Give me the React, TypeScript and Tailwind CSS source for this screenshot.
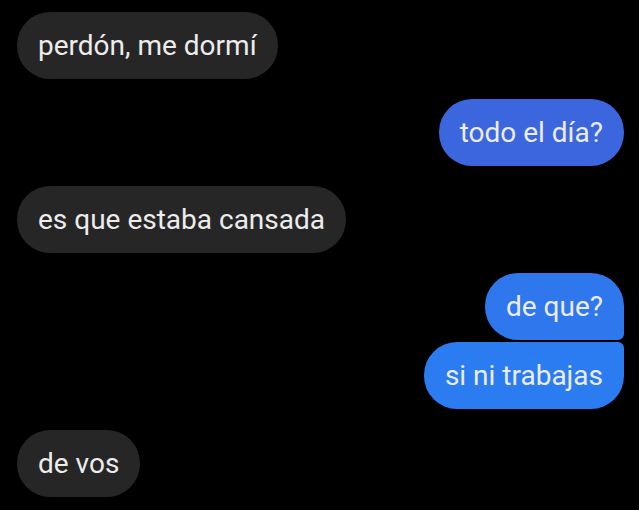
import React from 'react';

type Msg = { text: string; mine: boolean; shape: string; color?: string };

const messages: Msg[] = [
  { text: 'perdón, me dormí', mine: false, shape: 'rounded-[33px]' },
  { text: 'todo el día?', mine: true, shape: 'rounded-[33px]', color: 'bg-[#3b66de]' },
  { text: 'es que estaba cansada', mine: false, shape: 'rounded-[33px]' },
  { text: 'de que?', mine: true, shape: 'rounded-[33px] rounded-br-[6px]', color: 'bg-[#2f77ec]' },
  { text: 'si ni trabajas', mine: true, shape: 'rounded-[33px] rounded-tr-[6px]', color: 'bg-[#2a7cf0]' },
  { text: 'de vos', mine: false, shape: 'rounded-[33px]' },
];

const Bubble: React.FC<{ m: Msg }> = ({ m }) => (
  <div
    className={`h-[67px] px-[21px] flex items-center text-[28px] text-[#ececec] ${m.shape} ${
      m.mine ? `self-end ${m.color}` : 'self-start bg-[#262626]'
    }`}
  >
    {m.text}
  </div>
);

export default function App() {
  return (
    <div
      className="w-[639px] h-[510px] bg-black overflow-hidden flex flex-col pt-[12px] pl-[17px] pr-[15px]"
      style={{ fontFamily: 'Roboto, "Liberation Sans", sans-serif' }}
    >
      <Bubble m={messages[0]} />
      <div className="mt-[20px] flex flex-col">
        <Bubble m={messages[1]} />
      </div>
      <div className="mt-[20px] flex flex-col">
        <Bubble m={messages[2]} />
      </div>
      <div className="mt-[20px] flex flex-col gap-[2px]">
        <Bubble m={messages[3]} />
        <Bubble m={messages[4]} />
      </div>
      <div className="mt-[21px] flex flex-col">
        <Bubble m={messages[5]} />
      </div>
    </div>
  );
}
